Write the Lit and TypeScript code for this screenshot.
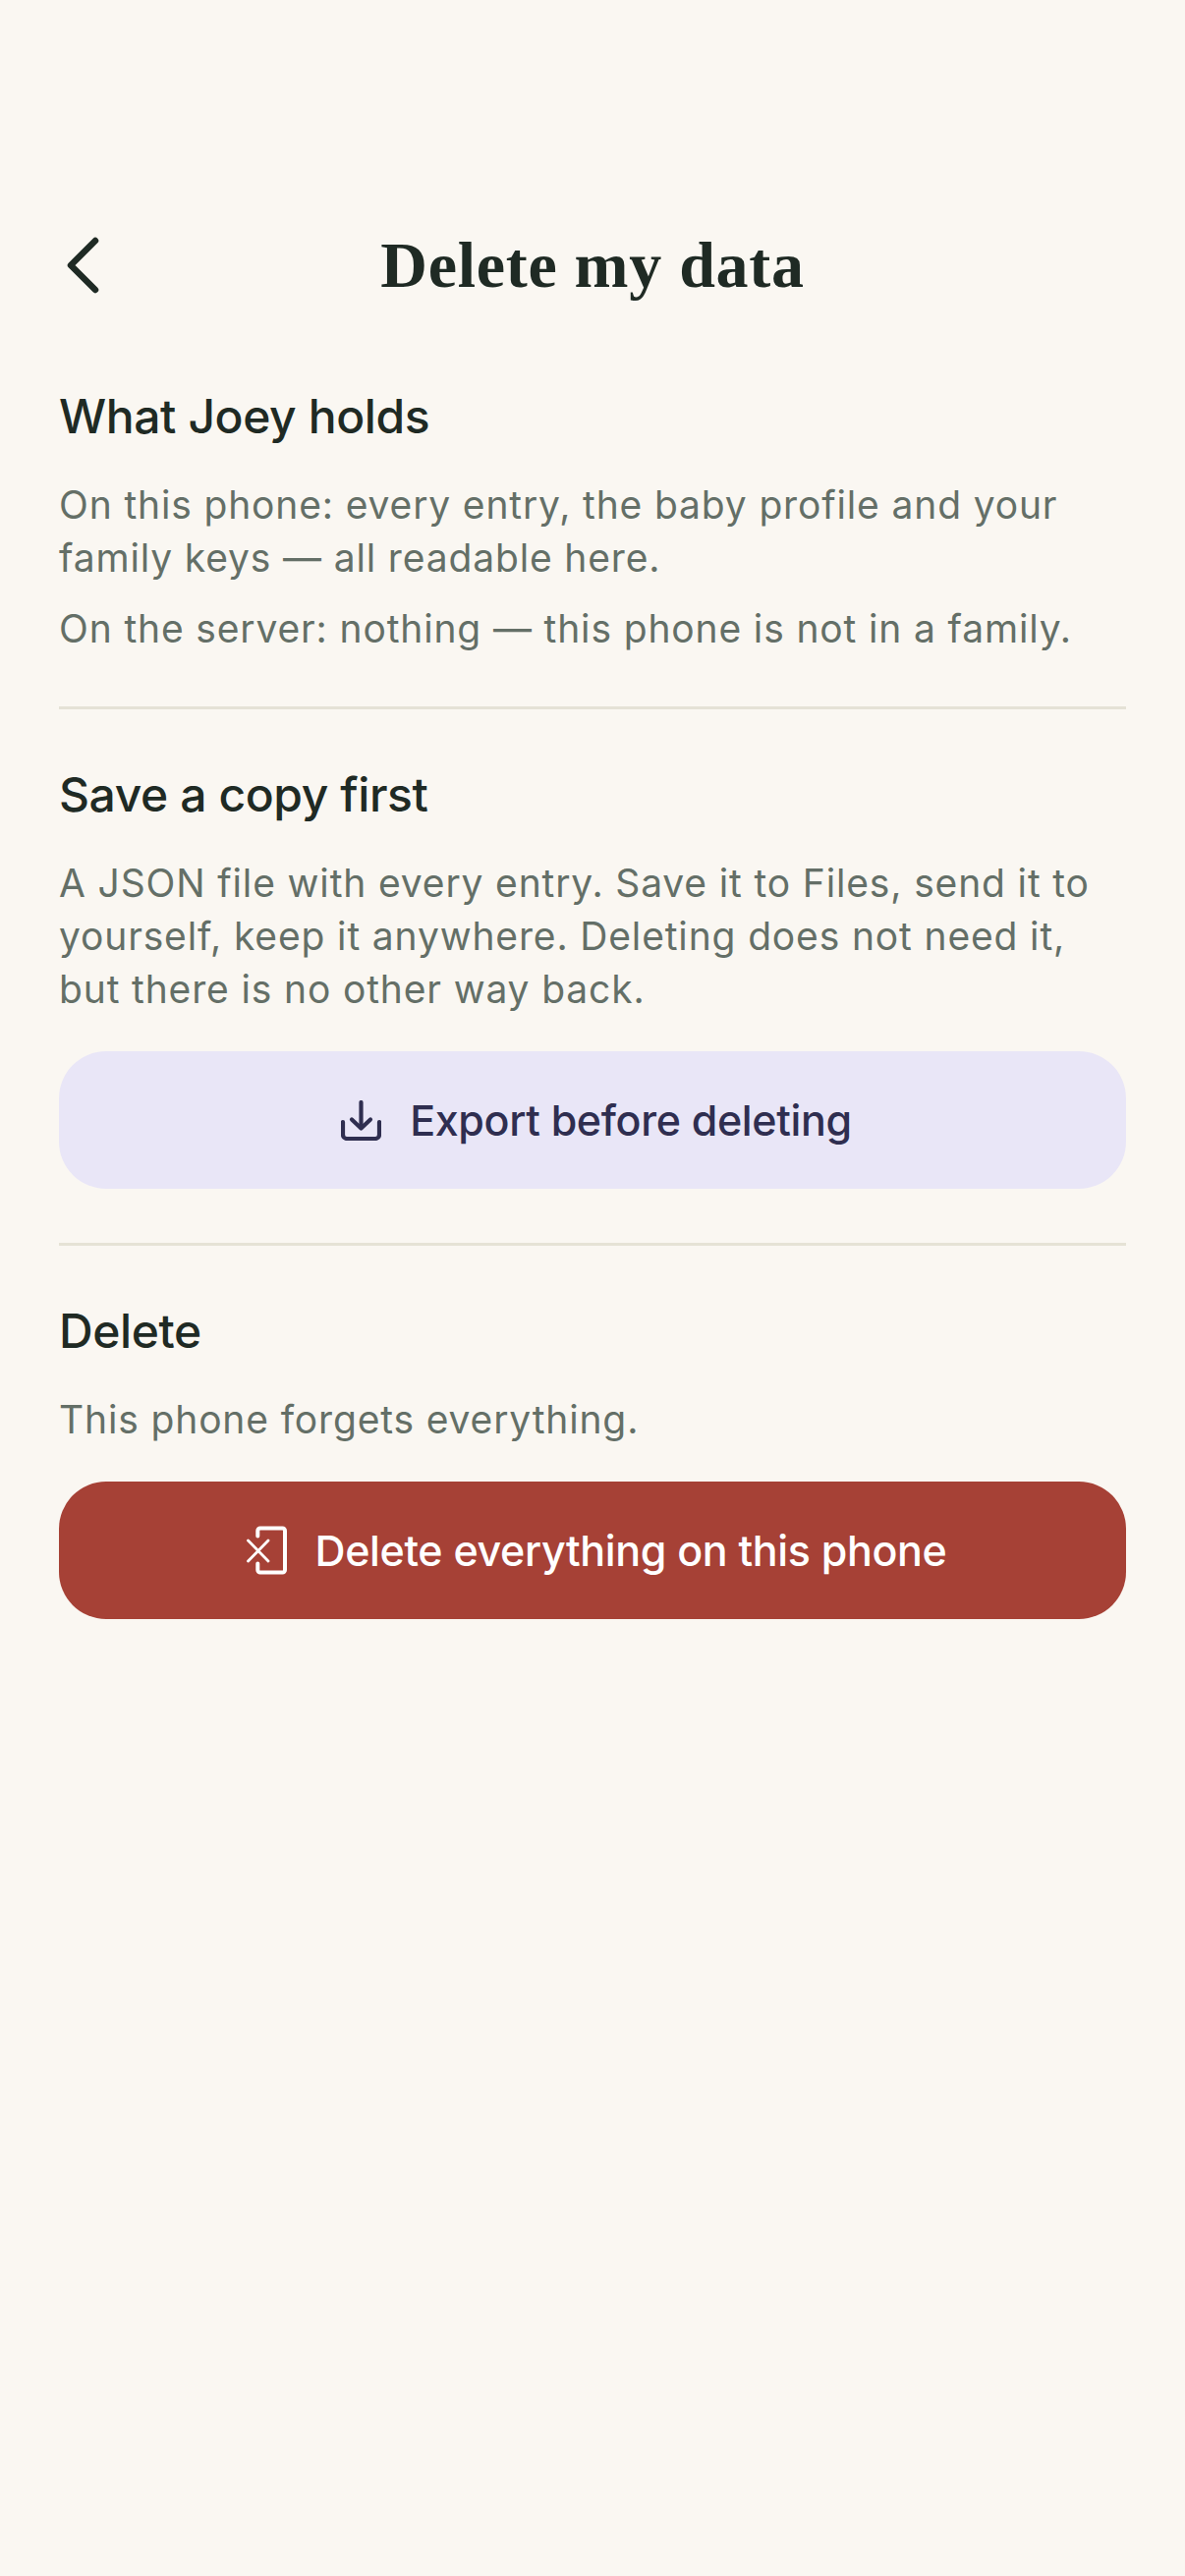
import { LitElement, html, css } from "lit";
import { customElement } from "lit/decorators.js";

@customElement("app-root")
export class AppRoot extends LitElement {
  static styles = css`
    :host { display: block; min-height: 2622px; background: #faf7f2; font-family: "Inter", "Liberation Sans", sans-serif; color: #1f2a24; box-sizing: border-box; padding: 222px 60px 0; font-variant-ligatures: none; }
    .header { display: grid; grid-template-columns: 84px 1fr 84px; align-items: center; height: 96px; }
    .back { display: flex; }
    .back svg { width: 48px; height: 64px; display: block; }
    h1 { margin: 0; text-align: center; font-family: "Liberation Serif", serif; font-weight: 700; font-size: 66px; line-height: 96px; color: #1f2a24; letter-spacing: 0.7px; }
    .sections { margin-top: 74px; display: flex; flex-direction: column; }
    section { padding-bottom: 52px; border-bottom: 3px solid #e5e2d6; margin-bottom: 55px; }
    section:last-child { border-bottom: 0; margin-bottom: 0; padding-bottom: 0; }
    .with-btn { padding-bottom: 55px; }
    h2 { margin: 0 0 31px; font-size: 48px; line-height: 64px; font-weight: 500; color: #1f2a24; letter-spacing: -0.4px; }
    p { margin: 0 0 18px; font-size: 39px; line-height: 54px; color: #646f67; letter-spacing: 0.85px; }
    p:last-of-type { margin-bottom: 0; }
    .btn { display: flex; align-items: center; justify-content: center; box-sizing: border-box; padding-left: 8px; height: 140px; border-radius: 48px; font-size: 43px; font-weight: 500; margin-top: 36px; letter-spacing: -0.35px; }
    .btn svg { display: block; }
    .export { background: #e9e6f7; color: #2f2e50; gap: 29px; }
    .delete { background: #a64136; color: #fff; gap: 28px; }
  `;
  render() {
    return html`
      <div class="header">
        <div class="back">
          <svg viewBox="0 0 48 64" fill="none" stroke="#1f2a24" stroke-width="6.5" stroke-linecap="round" stroke-linejoin="round"><path d="M37 7 L12 32 L37 57"/></svg>
        </div>
        <h1>Delete my data</h1>
        <div></div>
      </div>
      <div class="sections">
        <section>
          <h2>What Joey holds</h2>
          <p>On this phone: every entry, the baby profile and your family keys — all readable here.</p>
          <p>On the server: nothing — this phone is not in a family.</p>
        </section>
        <section class="with-btn">
          <h2>Save a copy first</h2>
          <p>A JSON file with every entry. Save it to Files, send it to yourself, keep it anywhere. Deleting does not need it, but there is no other way back.</p>
          <div class="btn export">
            <svg width="41" height="41" viewBox="0 0 41 41" fill="none" stroke="#2f2e50" stroke-width="4.2" stroke-linecap="round" stroke-linejoin="round"><path d="M2 22 V35 a4 4 0 0 0 4 4 H35 a4 4 0 0 0 4 -4 V22"/><path d="M20.5 2 V28"/><path d="M11 19.5 L20.5 28.5 L30 19.5"/></svg>
            <span>Export before deleting</span>
          </div>
        </section>
        <section>
          <h2>Delete</h2>
          <p>This phone forgets everything.</p>
          <div class="btn delete">
            <svg width="42" height="50" viewBox="0 0 42 50" fill="none" stroke="#fff" stroke-linecap="round" stroke-linejoin="round"><path stroke-width="4" d="M11.3 10.5 V5 a2.5 2.5 0 0 1 2.5 -2.5 H36.5 a2.5 2.5 0 0 1 2.5 2.5 V45 a2.5 2.5 0 0 1 -2.5 2.5 H13.8 a2.5 2.5 0 0 1 -2.5 -2.5 V38.5"/><path stroke-width="2.8" d="M1.5 15 L22 36 M22 15 L1.5 36"/></svg>
            <span>Delete everything on this phone</span>
          </div>
        </section>
      </div>
    `;
  }
}
